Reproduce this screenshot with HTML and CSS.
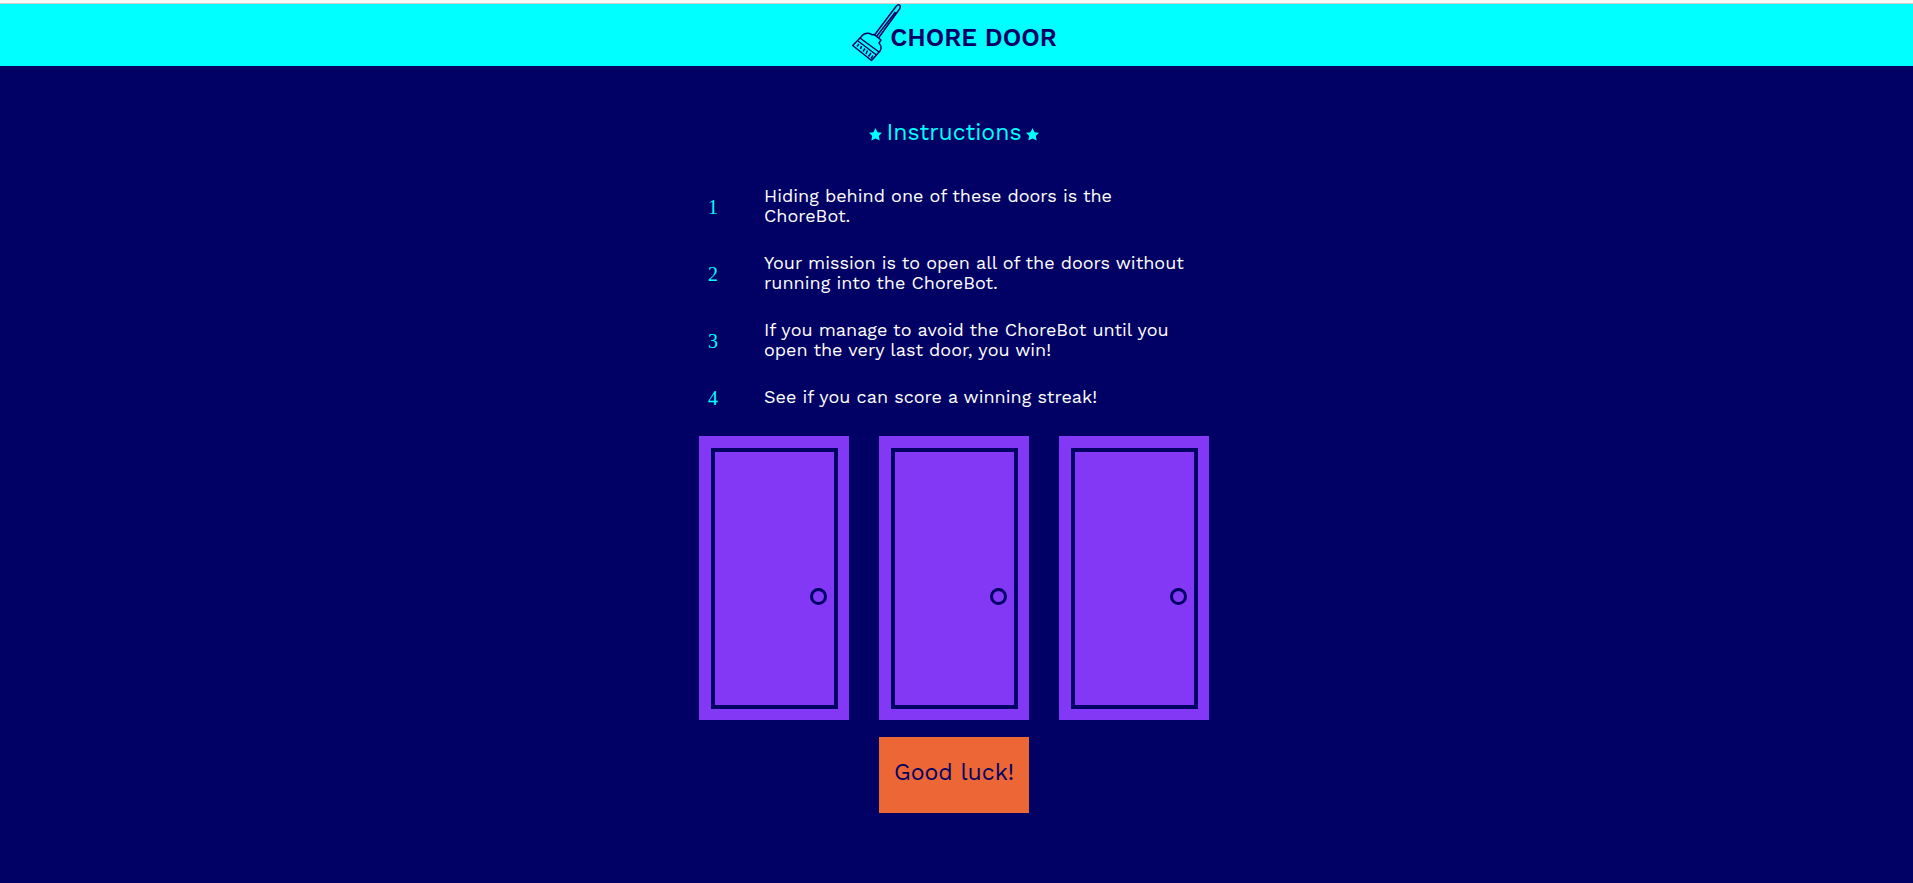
FILE: index.html
```html
<!DOCTYPE html>
<html lang="en">
<head>
<meta charset="utf-8">
<title>Chore Door</title>
<link rel="stylesheet" href="styles.css">
</head>
<body>
<header class="header">
  <svg class="broom" viewBox="0 0 50 58" aria-hidden="true">
    <path d="M22.500 31 44 2.500Q46 0 47.700 1.200Q49 2.500 47.500 5L26.500 34M24.500 32.500 43.500 8"/>
    <path d="M22 30.500 29 36 27 39Q30.500 43 28 47L19.500 56.500 .7 41.500 9 33Q12 28.500 18 29.500Q20 31.500 22 30.500Z"/>
    <path d="M8 34 27 48M6 37 24.500 51"/>
    <path d="M5 42.500 7 40M8.500 45 9.500 42M11 47.500 13 44.500M14 50 15.500 46.500M16.500 52.500 19 49M19 54.500 21 51.500"/>
  </svg>
  <h1 class="title">CHORE DOOR</h1>
</header>
<main class="game">
  <h2 class="heading">
    <svg class="star" viewBox="0 0 14 14" aria-hidden="true"><path d="M7 0 9.200 4.500 14 5 10.500 8.700 11.500 13.500 7 11.200 2.500 13.500 3.500 8.700 0 5 4.800 4.500Z"/></svg>
    <span>Instructions</span>
    <svg class="star" viewBox="0 0 14 14" aria-hidden="true"><path d="M7 0 9.200 4.500 14 5 10.500 8.700 11.500 13.500 7 11.200 2.500 13.500 3.500 8.700 0 5 4.800 4.500Z"/></svg>
  </h2>
  <table class="rules">
    <tr><th class="number" scope="row">1</th><td class="rule">Hiding behind one of these doors is the<br>ChoreBot.</td></tr>
    <tr><th class="number" scope="row">2</th><td class="rule">Your mission is to open all of the doors without<br>running into the ChoreBot.</td></tr>
    <tr><th class="number" scope="row">3</th><td class="rule">If you manage to avoid the ChoreBot until you<br>open the very last door, you win!</td></tr>
    <tr><th class="number" scope="row">4</th><td class="rule">See if you can score a winning streak!</td></tr>
  </table>
  <div class="doors">
    <button class="door" type="button" aria-label="Door 1"><span class="panel"><span class="knob"></span></span></button>
    <button class="door" type="button" aria-label="Door 2"><span class="panel"><span class="knob"></span></span></button>
    <button class="door" type="button" aria-label="Door 3"><span class="panel"><span class="knob"></span></span></button>
  </div>
  <button class="start" type="button">Good luck!</button>
</main>
</body>
</html>
```
FILE: styles.css
```css
* { box-sizing: border-box; }
html { background: #010165; }
body {
  margin: 0;
  font-family: "Work Sans", "Noto Sans", sans-serif;
  color: #fff;
}
.header {
  display: flex;
  justify-content: center;
  padding: 1px 4px 0 0;
  height: 66px;
  border-top: 3px solid #f8f8f8;
  box-shadow: inset 0 1px #d6cfcb;
  background: #00ffff;
  color: #010165;
}
.broom {
  width: 50px;
  height: 58px;
  margin-right: -12px;
  fill: none;
  stroke: #010165;
  stroke-width: 1.500px;
  stroke-linejoin: round;
}
.title {
  margin: 18px 0 0;
  font-size: 25px;
  line-height: 32px;
  font-weight: 600;
}
.game {
  display: flex;
  flex-direction: column;
  align-items: center;
  padding: 51px 5px 0 0;
}
.heading {
  display: flex;
  align-items: center;
  gap: 4px;
  margin: 0 0 25px;
  font-size: 23px;
  line-height: 32px;
  font-weight: 400;
  color: #00ffff;
}
.star { width: 13px; height: 13px; margin-top: 2px; fill: #00ffff; }
.rules {
  width: 510px;
  border-collapse: collapse;
}
.number {
  width: 65px;
  padding: 0 0 2px 9px;
  text-align: left;
  font: 400 20px/20px "Liberation Serif", serif;
  color: #00ffff;
}
.rule {
  padding: 12px 0 15px;
  font-size: 18px;
  line-height: 20px;
  white-space: nowrap;
}
.doors {
  display: flex;
  gap: 30px;
  margin-top: 14px;
}
.door {
  width: 150px;
  height: 284px;
  padding: 12px 11px 11px 12px;
  border: 0;
  background: #8338f5;
}
.panel {
  display: flex;
  justify-content: flex-end;
  align-items: flex-end;
  height: 100%;
  padding: 0 7px 100px 0;
  border: 4px solid #010165;
}
.knob {
  width: 17px;
  height: 17px;
  border: 3px solid #010165;
  border-radius: 50%;
}
.start {
  width: 150px;
  height: 76px;
  margin-top: 17px;
  padding: 0 0 6px;
  border: 0;
  background: #ec6636;
  color: #010165;
  font-family: inherit;
  font-size: 23px;
}
```
